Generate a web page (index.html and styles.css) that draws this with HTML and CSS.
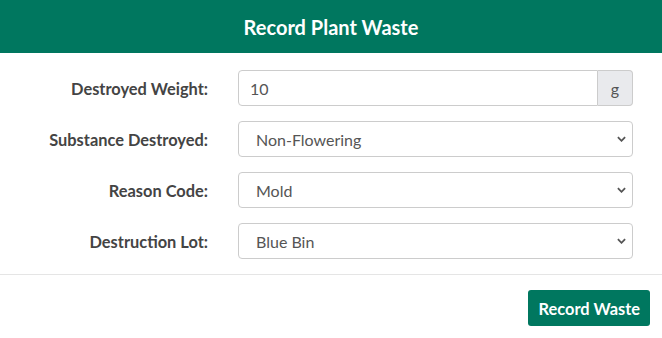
FILE: index.html
```html
<!DOCTYPE html>
<html lang="en">
  <head>
    <meta charset="UTF-8" />
    <meta name="viewport" content="width=device-width, initial-scale=1.0" />
    <title>Record Plant Waste</title>
    <link rel="stylesheet" href="styles.css">
  </head>
  <body>
    <div class="modal">
      <div class="modal-header">
        <h4>Record Plant Waste</h4>
      </div>

      <form class="modal-body">
        <label class="control-label" for="weight">Destroyed Weight:</label>
        <div class="input-group">
          <input id="weight" type="text" value="10" />
          <span class="addon">g</span>
        </div>

        <label class="control-label" for="substance">Substance Destroyed:</label>
        <select id="substance">
          <option>Non-Flowering</option>
        </select>

        <label class="control-label" for="reason">Reason Code:</label>
        <select id="reason">
          <option>Mold</option>
        </select>

        <label class="control-label" for="lot">Destruction Lot:</label>
        <select id="lot">
          <option>Blue Bin</option>
        </select>
      </form>

      <div class="modal-footer">
        <button type="button">Record Waste</button>
      </div>
    </div>
  </body>
</html>
```

FILE: styles.css
```css
body {
  margin: 0;
  font-family: Lato, "Open Sans", sans-serif;
  background: white;
  color: #444;
}
.modal-header {
  background: #00775f;
  height: 53px;
  display: flex;
  align-items: center;
  justify-content: center;
}
.modal-header h4 {
  margin: 0;
  color: white;
  font-size: 20px;
  font-weight: 700;
}
.modal-body {
  display: grid;
  grid-template-columns: 208px 1fr;
  column-gap: 30px;
  row-gap: 15px;
  align-items: center;
  padding: 17px 29px 15px 0;
}
.control-label {
  text-align: right;
  font-weight: 700;
  font-size: 16.4px;
}
.input-group {
  display: flex;
  height: 36px;
}
input,
select {
  font-family: inherit;
  font-size: 16px;
  color: #555;
  height: 36px;
  box-sizing: border-box;
  border: 1px solid #ccc;
  border-radius: 4px;
  background-color: white;
  outline: none;
}
input {
  flex: 1;
  min-width: 0;
  padding: 0 11px;
  border-radius: 4px 0 0 4px;
}
.addon {
  width: 34px;
  display: flex;
  align-items: center;
  justify-content: center;
  background: #e9eaed;
  border: 1px solid #ccc;
  border-left: none;
  border-radius: 0 4px 4px 0;
  color: #555;
  font-size: 16px;
}
select {
  width: 100%;
  padding: 0 17px;
  appearance: none;
  -webkit-appearance: none;
  background-image: url("data:image/svg+xml,%3Csvg xmlns='http://www.w3.org/2000/svg' width='10' height='6' viewBox='0 0 10 6'%3E%3Cpath d='M1 1l4 4 4-4' fill='none' stroke='%23555' stroke-width='2'/%3E%3C/svg%3E");
  background-repeat: no-repeat;
  background-position: right 6px center;
  background-size: 9px 6px;
}
.modal-footer {
  border-top: 1px solid #e5e5e5;
  display: flex;
  justify-content: flex-end;
  padding: 15px 12px 12px 0;
}
button {
  background: #00775f;
  color: white;
  border: none;
  border-radius: 3px;
  font-family: inherit;
  font-size: 16.4px;
  font-weight: 700;
  height: 36px;
  padding: 0 10px;
  cursor: pointer;
}
```
